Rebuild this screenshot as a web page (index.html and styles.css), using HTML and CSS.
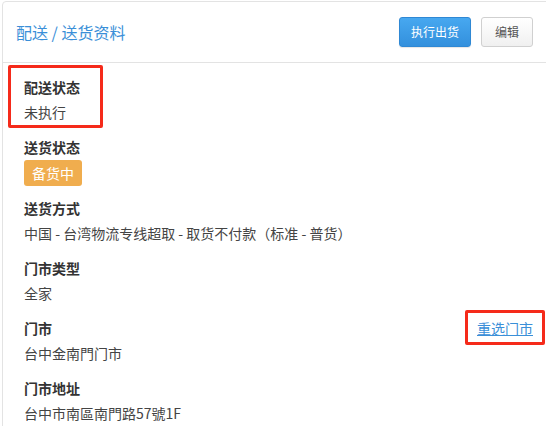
FILE: index.html
```html
<!DOCTYPE html>
<html lang="zh-CN">
<head>
    <meta charset="UTF-8">
    <meta name="viewport" content="width=device-width, initial-scale=1.0">
    <title>配送 / 送货资料</title>
    <link rel="stylesheet" href="styles.css">
</head>
<body>
    <div class="panel">
        <div class="panel-header">
            <h2 class="panel-title">配送 / 送货资料</h2>
            <div class="panel-actions">
                <button type="button" class="btn btn-primary">执行出货</button>
                <button type="button" class="btn btn-default">编辑</button>
            </div>
        </div>

        <div class="panel-body">
            <div class="field">
                <span class="mark mark-status"></span>
                <div class="field-label">配送状态</div>
                <div class="field-value">未执行</div>
            </div>

            <div class="field">
                <div class="field-label">送货状态</div>
                <div class="field-value"><span class="badge">备货中</span></div>
            </div>

            <div class="field">
                <div class="field-label">送货方式</div>
                <div class="field-value">中国 - 台湾物流专线超取 - 取货不付款（标准 - 普货）</div>
            </div>

            <div class="field">
                <div class="field-label">门市类型</div>
                <div class="field-value">全家</div>
            </div>

            <div class="field">
                <div class="field-label">
                    门市
                    <a href="#" class="field-link">重选门市<span class="mark mark-link"></span></a>
                </div>
                <div class="field-value">台中金南門门市</div>
            </div>

            <div class="field">
                <div class="field-label">门市地址</div>
                <div class="field-value">台中市南區南門路57號1F</div>
            </div>
        </div>
    </div>
</body>
</html>
```

FILE: styles.css
```css
* {
    box-sizing: border-box;
}
body {
    margin: 0;
    padding: 1px 0 0 2px;
    overflow: hidden;
    background-color: #fff;
    font-family: "Noto Sans CJK SC", "Noto Sans", sans-serif;
    font-size: 14px;
    color: #333;
}
.panel {
    margin-right: -4px;
    border: 1px solid #e3e3e3;
    border-radius: 4px;
    background-color: #fff;
}
.panel-header {
    display: flex;
    justify-content: space-between;
    align-items: center;
    height: 61px;
    padding: 0 16px 0 13px;
    border-bottom: 1px solid #e3e3e3;
}
.panel-title {
    margin: 0;
    font-size: 16px;
    font-weight: normal;
    line-height: 24px;
    color: #3a8fd8;
}
.panel-actions {
    display: flex;
    gap: 10px;
}
.btn {
    height: 30px;
    font-family: inherit;
    font-size: 12px;
    line-height: 28px;
    border-radius: 3px;
    cursor: pointer;
}
.btn-primary {
    padding: 0 11px;
    color: #fff;
    border: 1px solid #2f88d4;
    background: linear-gradient(#47a8f0, #3390dd);
    box-shadow: 0 1px 1px rgba(0,0,0,0.1);
}
.btn-default {
    padding: 0 13px;
    color: #555;
    border: 1px solid #d0d0d0;
    background: linear-gradient(#fff, #f0f0f0);
}
.panel-body {
    padding: 12px 16px 10px 21px;
}
.field {
    position: relative;
    margin-bottom: 10px;
}
.field-label {
    display: flex;
    justify-content: space-between;
    line-height: 25px;
    font-weight: bold;
    color: #333;
}
.field-value {
    line-height: 25px;
    color: #444;
}
.field-link {
    position: relative;
    font-weight: normal;
    color: #3a8fd8;
    text-decoration: underline;
}
.badge {
    display: inline-block;
    height: 26px;
    padding: 0 8px;
    line-height: 26px;
    color: #fff;
    background-color: #f0ad4e;
    border-radius: 3px;
    vertical-align: top;
}
.mark {
    position: absolute;
    border: 3px solid #f52a1a;
    border-radius: 2px;
    pointer-events: none;
}
.mark-status {
    left: -16px;
    top: -10px;
    width: 95px;
    height: 63px;
}
.mark-link {
    left: -12px;
    top: -6px;
    right: -12px;
    bottom: -4px;
}
```
